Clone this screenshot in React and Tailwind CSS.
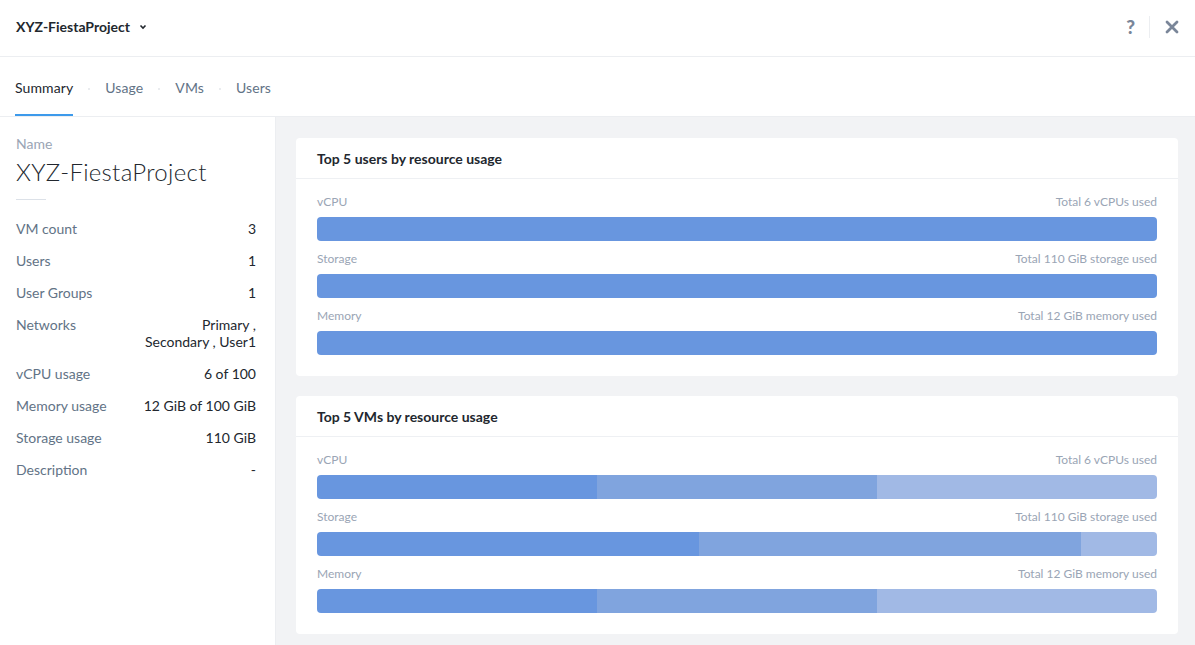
import { useState } from "react";

const details = [
  { label: "VM count", value: "3" },
  { label: "Users", value: "1" },
  { label: "User Groups", value: "1" },
  { label: "Networks", value: ["Primary ,", "Secondary , User1"] },
  { label: "vCPU usage", value: "6 of 100" },
  { label: "Memory usage", value: "12 GiB of 100 GiB" },
  { label: "Storage usage", value: "110 GiB" },
  { label: "Description", value: "-" },
];

const userRows = [
  { name: "vCPU", total: "Total 6 vCPUs used", parts: [100] },
  { name: "Storage", total: "Total 110 GiB storage used", parts: [100] },
  { name: "Memory", total: "Total 12 GiB memory used", parts: [100] },
];

const vmRows = [
  { name: "vCPU", total: "Total 6 vCPUs used", parts: [33.33, 33.34, 33.33] },
  { name: "Storage", total: "Total 110 GiB storage used", parts: [45.45, 45.45, 9.1] },
  { name: "Memory", total: "Total 12 GiB memory used", parts: [33.33, 33.34, 33.33] },
];

const shades = ["bg-[#6896df]", "bg-[#80a4de]", "bg-[#a1b9e5]"];

function Bar({ parts }) {
  return (
    <div className="flex h-6 w-full overflow-hidden rounded">
      {parts.map((p, i) => (
        <div key={i} className={shades[i]} style={{ width: p + "%" }} />
      ))}
    </div>
  );
}

function UsageCard({ title, rows }) {
  return (
    <div className="rounded bg-white">
      <div className="flex h-[41px] items-center border-b border-[#eef0f3] px-[21px] text-[14px] font-bold text-[#22272e]">
        {title}
      </div>
      <div className="px-[21px] pb-[21px] pt-[15px]">
        {rows.map((r) => (
          <div key={r.name} className="mb-[10px] last:mb-0">
            <div className="mb-[8px] flex justify-between text-[12px] leading-[15px] text-[#9aa5b5]">
              <span>{r.name}</span>
              <span>{r.total}</span>
            </div>
            <Bar parts={r.parts} />
          </div>
        ))}
      </div>
    </div>
  );
}

export default function App() {
  const [tab, setTab] = useState("Summary");
  const tabs = ["Summary", "Usage", "VMs", "Users"];

  return (
    <div className="flex h-[645px] w-[1195px] flex-col overflow-hidden bg-white font-['Lato',sans-serif] text-[#22272e]">
      {/* header */}
      <div className="flex h-[57px] shrink-0 items-center justify-between border-b border-[#eceef1] pb-[3px] pl-4 pr-[16px]">
        <div className="flex items-center gap-[9px]">
          <span className="text-[14px] font-bold">XYZ-FiestaProject</span>
          <svg width="8" height="6" viewBox="0 0 8 6" className="mt-[1px]">
            <path d="M1.5 1.5 L4 4 L6.5 1.5" fill="none" stroke="#22272e" strokeWidth="1.6" />
          </svg>
        </div>
        <div className="flex items-center">
          <span className="pr-[14px] text-[19px] font-black leading-none text-[#7a8699]">?</span>
          <div className="h-[22px] w-px bg-[#eceef1]" />
          <svg width="14" height="14" viewBox="0 0 14 14" className="ml-[15px]">
            <path d="M2 2 L12 12 M12 2 L2 12" stroke="#7a8699" strokeWidth="2.8" strokeLinecap="round" />
          </svg>
        </div>
      </div>

      {/* tabs */}
      <div className="flex h-[60px] shrink-0 items-end border-b border-[#eceef1] pl-[15px]">
        {tabs.map((t, i) => (
          <div key={t} className="flex items-end">
            {i > 0 && <span className="mx-[15px] mb-[26px] h-[2px] w-[2px] rounded-full bg-[#e3e6ea]" />}
            <button
              onClick={() => setTab(t)}
              className={
                "border-b-2 pb-[18px] text-[14px] leading-[17px] tracking-[0.1px] " +
                (tab === t ? "border-[#3d9aeb] text-[#22272e]" : "border-transparent text-[#627386]")
              }
            >
              {t}
            </button>
          </div>
        ))}
      </div>

      <div className="flex min-h-0 flex-1">
        {/* left panel */}
        <div className="w-[276px] shrink-0 border-r border-[#eceef1] bg-white pl-4 pr-[19px] pt-[18px]">
          <div className="text-[14px] leading-[17px] text-[#9aa5b5]">Name</div>
          <div className="mt-[5px] text-[24px] font-light leading-[30px] tracking-[0.3px] text-[#22272e]">XYZ-FiestaProject</div>
          <div className="mt-[12px] h-px w-[30px] bg-[#dce1e8]" />
          <div className="mt-[20px] flex flex-col gap-[15px]">
            {details.map((d) => (
              <div key={d.label} className="flex justify-between text-[14px] leading-[17px]">
                <span className="text-[#627386]">{d.label}</span>
                <span className="text-right text-[#22272e]">
                  {Array.isArray(d.value) ? d.value.map((v) => <div key={v}>{v}</div>) : d.value}
                </span>
              </div>
            ))}
          </div>
        </div>

        {/* right panel */}
        <div className="flex flex-1 flex-col gap-[20px] bg-[#f2f3f5] pl-[20px] pr-[17px] pt-[21px]">
          <UsageCard title="Top 5 users by resource usage" rows={userRows} />
          <UsageCard title="Top 5 VMs by resource usage" rows={vmRows} />
        </div>
      </div>
    </div>
  );
}
